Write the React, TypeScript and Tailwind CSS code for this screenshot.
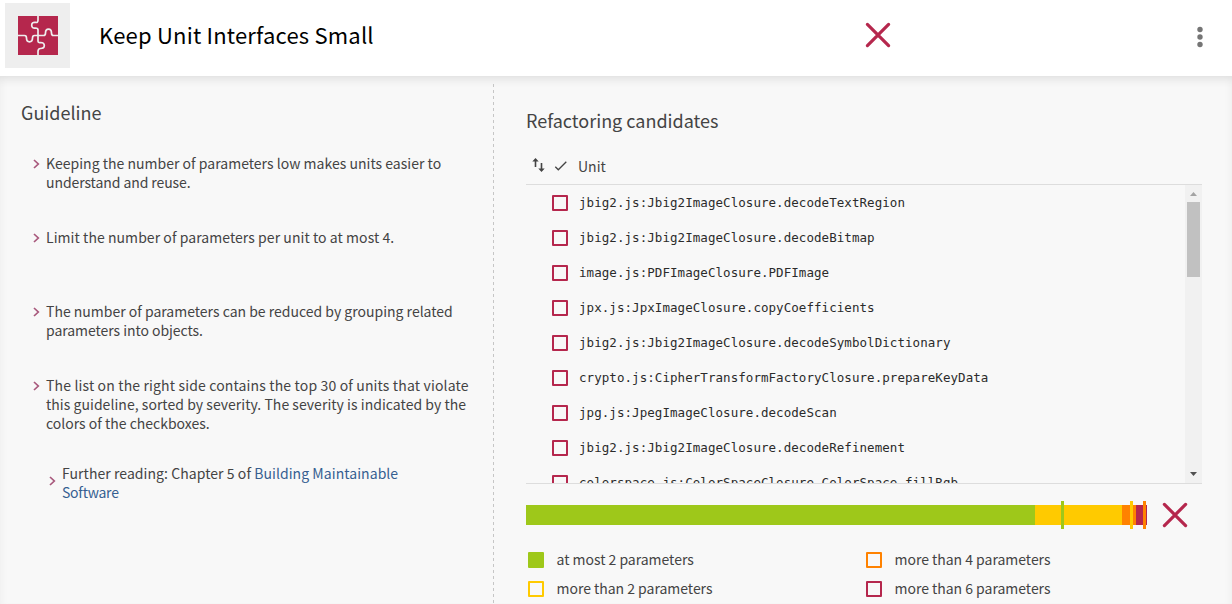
import type { ReactNode } from "react";

const UNITS = [
  "jbig2.js:Jbig2ImageClosure.decodeTextRegion",
  "jbig2.js:Jbig2ImageClosure.decodeBitmap",
  "image.js:PDFImageClosure.PDFImage",
  "jpx.js:JpxImageClosure.copyCoefficients",
  "jbig2.js:Jbig2ImageClosure.decodeSymbolDictionary",
  "crypto.js:CipherTransformFactoryClosure.prepareKeyData",
  "jpg.js:JpegImageClosure.decodeScan",
  "jbig2.js:Jbig2ImageClosure.decodeRefinement",
  "colorspace.js:ColorSpaceClosure.ColorSpace.fillRgb",
];

function Cross() {
  return (
    <svg width="26" height="26" viewBox="0 0 26 26" fill="none" stroke="#b5274d" strokeWidth="3.2" className="shrink-0">
      <path d="M2.400 2.400 23.600 23.600M23.600 2.400 2.400 23.600" strokeLinecap="round" />
    </svg>
  );
}

function PuzzleLogo() {
  return (
    <div className="flex h-[65px] w-[65px] items-center justify-center bg-[#eeeeee]">
      <svg width="40" height="39" viewBox="0 0 40 39" fill="none">
        <path fill="#b5274d" d="M0 0h40v39H0z" />
        <path
          stroke="#eeeeee"
          strokeWidth="1.7"
          d="M20 0V4Q20 7 17.500 6.400Q13.600 6 13.700 9.300Q13.800 12.500 17.500 12Q20 12 20 14V25q0 2 2.500 1.500q3.800 0 3.800 3t-3.800 3q-2.500 0-2.500 3V39M0 19.500H6.500q2 0 2 2.500q0 3.800 3 3.800t3-3.800q0-2.500 2-2.500H25.500q2 0 2-2.500q0-3.800 3-3.800t3 3.800q0 2.500 2 2.500H40"
        />
      </svg>
    </div>
  );
}

function Chevron({ className }: { className: string }) {
  return (
    <svg width="8" height="10" viewBox="0 0 8 10" fill="none" stroke="#a8587c" strokeWidth="1.7" className={`mr-[5px] shrink-0 ${className}`}>
      <path d="M1 1 5.300 5 1 9" />
    </svg>
  );
}

function Bullet({ children, className }: { children: ReactNode; className: string }) {
  return (
    <li className={`flex ${className}`}>
      <Chevron className="mt-[5px]" />
      <div className="whitespace-nowrap">{children}</div>
    </li>
  );
}

function Box({ color }: { color: string }) {
  return <span className={`size-4 shrink-0 rounded-[1px] border-2 ${color}`} />;
}

function Legend({ color, children }: { color: string; children: ReactNode }) {
  return (
    <div className="flex h-[29px] items-center gap-[12.5px] tracking-[-0.02px]">
      <Box color={color} />
      <span>{children}</span>
    </div>
  );
}

export default function App() {
  return (
    <div className="flex h-[604px] w-[1232px] flex-col overflow-hidden bg-[#f8f8f8] font-['Noto_Sans_CJK_SC',sans-serif] text-[14px] leading-[19px] text-[#444444]">
      <header className="flex h-[76px] shrink-0 items-start bg-white pl-[5px] pt-[3px]">
        <PuzzleLogo />
        <h1 className="ml-[29px] mt-4 w-[766px] text-[22px] leading-[30px] tracking-[0.2px] text-black">
          Keep Unit Interfaces Small
        </h1>
        <div className="mt-[19px]"><Cross /></div>
        <svg width="8" height="22" viewBox="0 0 8 22" fill="#757575" className="ml-[305px] mt-[23px]">
          <circle cx="4" cy="3.500" r="2.700" />
          <circle cx="4" cy="11" r="2.700" />
          <circle cx="4" cy="18.500" r="2.700" />
        </svg>
      </header>

      <main className="flex min-h-0 flex-1 shadow-[inset_0_10px_9px_-7px_#dedede,inset_6px_0_6px_-4px_#f0f0f0,inset_-6px_0_6px_-4px_#f0f0f0]">
        <section className="w-[493px] shrink-0 pl-[21px] pt-6">
          <h2 className="text-[18px] leading-[24px]">Guideline</h2>
          <ul className="mt-[30px] pl-3">
            <Bullet className="h-[74px]">
              <p className="tracking-[0.02px]">Keeping the number of parameters low makes units easier to</p>
              <p className="tracking-[-0.08px]">understand and reuse.</p>
            </Bullet>
            <Bullet className="h-[74px]">
              <p className="tracking-[0.06px]">Limit the number of parameters per unit to at most 4.</p>
            </Bullet>
            <Bullet className="h-[74px]">
              <p>The number of parameters can be reduced by grouping related</p>
              <p className="tracking-[-0.05px]">parameters into objects.</p>
            </Bullet>
            <Bullet className="h-[88px]">
              <p className="tracking-[0.15px]">The list on the right side contains the top 30 of units that violate</p>
              <p className="tracking-[0.04px]">this guideline, sorted by severity. The severity is indicated by the</p>
              <p>colors of the checkboxes.</p>
            </Bullet>
            <li className="flex items-center pl-4">
              <Chevron className="-mt-1" />
              <p className="whitespace-nowrap tracking-[0.06px]">
                Further reading: Chapter 5 of <a className="text-[#365f91]">Building Maintainable<br /><span className="tracking-[-0.25px]">Software</span></a>
              </p>
            </li>
          </ul>
        </section>

        <svg width="1" height="520" className="mt-2 shrink-0">
          <path d="M.5 0V520" stroke="#c6c6c6" strokeDasharray="3 3" />
        </svg>

        <section className="ml-8 w-[676px] shrink-0 pt-8">
          <h2 className="text-[18px] leading-[24px]">Refactoring candidates</h2>
          <div className="mt-[14px] flex h-[39px] items-center border-b border-[#dddddd] pl-[6px]">
            <svg width="14" height="16" viewBox="0 0 14 16" fill="#444444">
              <path d="M3.500 1 .3 4.400h2.400V10h1.600V4.400h2.400zM8.700 6v5.600H6.300l3.200 3.400 3.200-3.400h-2.400V6z" />
            </svg>
            <svg width="14" height="12" viewBox="0 0 14 12" fill="none" stroke="#444444" strokeWidth="1.300" className="ml-2 mt-px">
              <path d="m1.300 6.800 3 3L12.300 1.800" />
            </svg>
            <span className="ml-[10px] mt-[3px]">Unit</span>
          </div>
          <div className="flex h-[299px] overflow-hidden border-b border-[#dddddd]">
            <ul className="min-w-0 flex-1 pl-[26px]">
              {UNITS.map((unit) => (
                <li key={unit} className="flex h-[35px] items-center gap-[11px] whitespace-nowrap font-['DejaVu_Sans_Mono',monospace] text-[12.5px] tracking-[0.056px] text-[#2b2b2b]">
                  <Box color="border-[#b5274d]" />
                  <span>{unit}</span>
                </li>
              ))}
            </ul>
            <div className="flex w-[17px] flex-col items-center bg-[#f1f1f1]">
              <svg width="17" height="17" className="shrink-0"><path fill="#a3a3a3" d="m5 11 3.500-4L12 11z" /></svg>
              <div className="h-[75px] w-[13px] shrink-0 bg-[#c1c1c1]" />
              <svg width="17" height="17" className="mt-auto shrink-0"><path fill="#505050" d="m5 6 3.500 4L12 6z" /></svg>
            </div>
          </div>

          <div className="mt-[17px] flex h-[28px] items-center">
            <div className="relative flex h-5 w-[621px] bg-[#b5274d]">
              <div className="w-[509px] bg-[#9ec81a]" />
              <div className="w-[87px] bg-[#ffca00]" />
              <div className="w-[14px] bg-[#ff8200]" />
              <div className="absolute -top-1 left-[535px] h-7 w-[3px] bg-[#9ec81a]" />
              <div className="absolute -top-1 left-[604px] h-7 w-[3px] bg-[#ffca00]" />
              <div className="absolute -top-1 left-[617px] h-7 w-[3px] bg-[#ff8200]" />
            </div>
            <div className="ml-[15px]"><Cross /></div>
          </div>

          <div className="mt-4 grid grid-cols-[338px_1fr] pl-[2px]">
            <Legend color="border-[#9ec81a] bg-[#9ec81a]">at most 2 parameters</Legend>
            <Legend color="border-[#ff8200]">more than 4 parameters</Legend>
            <Legend color="border-[#ffca00]">more than 2 parameters</Legend>
            <Legend color="border-[#b5274d]">more than 6 parameters</Legend>
          </div>
        </section>
      </main>
    </div>
  );
}
